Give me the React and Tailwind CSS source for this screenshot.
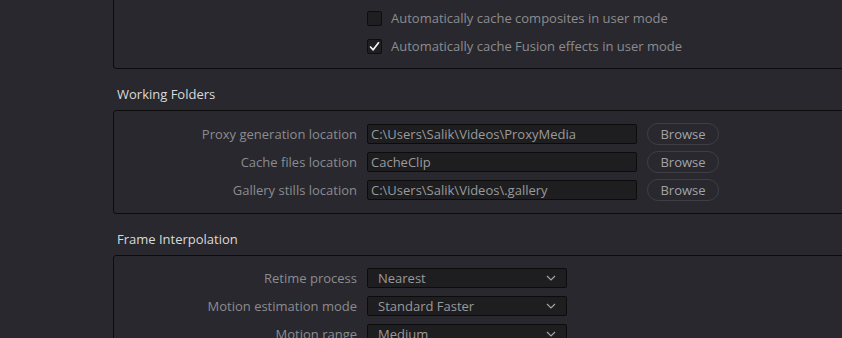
import React from 'react';

const font = { fontFamily: '"Open Sans", "Noto Sans", sans-serif' };

const Checkbox = ({ checked }) => (
  <div className="w-[15px] h-[15px] rounded-[2px] border border-[#0e0e10] bg-[#1f1f21] flex items-center justify-center">
    {checked && (
      <svg width="11" height="11" viewBox="0 0 11 11">
        <path d="M1.5 6 L4.2 8.8 L9.5 1.8" fill="none" stroke="#eef6f6" strokeWidth="1.7" strokeLinecap="round" strokeLinejoin="round" />
      </svg>
    )}
  </div>
);

const Row = ({ label, children }) => (
  <div className="grid grid-cols-[243px_1fr] gap-x-[10px] h-[28px] items-center">
    <div className="text-right text-[#8c8c8e] text-[13px] leading-none">{label}</div>
    <div className="flex items-center">{children}</div>
  </div>
);

const PathInput = ({ value }) => (
  <>
    <div className="w-[270px] h-[20px] bg-[#1e1e20] border border-[#0c0c0d] rounded-[2px] flex items-center px-[3px] text-[13px] text-[#9a9a9c] leading-none">
      {value}
    </div>
    <button className="ml-[10px] w-[72px] h-[22px] rounded-full border border-[#3e3e44] text-[13px] text-[#a3a3a5] leading-none">
      Browse
    </button>
  </>
);

const Select = ({ value }) => (
  <div className="w-[200px] h-[20px] bg-[#1e1e20] border border-[#0c0c0d] rounded-[2px] flex items-center justify-between pl-[10px] pr-[10px] text-[13px] text-[#9a9a9c] leading-none">
    <span>{value}</span>
    <svg width="10" height="6" viewBox="0 0 10 6">
      <path d="M1 1 L5 5 L9 1" fill="none" stroke="#a3a3a8" strokeWidth="1.2" />
    </svg>
  </div>
);

const Header = ({ title }) => (
  <div className="h-[41px] flex items-end pb-[8px] pl-[4px] text-[13px] leading-[16px] text-[#dadadc]">
    {title}
  </div>
);

export default function App() {
  return (
    <div className="w-[842px] h-[338px] overflow-hidden bg-[#28282e] pl-[113px]" style={font}>
      <div className="w-[800px] -mt-[20px] pt-[23px] pb-[8px] border border-[#0c0c0d] rounded-[3px]">
        <Row label="">
          <Checkbox />
          <span className="ml-[9px] text-[13px] text-[#8c8c8e] leading-none">Automatically cache composites in user mode</span>
        </Row>
        <Row label="">
          <Checkbox checked />
          <span className="ml-[9px] text-[13px] text-[#8c8c8e] leading-none">Automatically cache Fusion effects in user mode</span>
        </Row>
      </div>

      <Header title="Working Folders" />
      <div className="w-[800px] pt-[9px] pb-[9px] border border-[#0c0c0d] rounded-[3px]">
        <Row label="Proxy generation location">
          <PathInput value="C:\Users\Salik\Videos\ProxyMedia" />
        </Row>
        <Row label="Cache files location">
          <PathInput value="CacheClip" />
        </Row>
        <Row label="Gallery stills location">
          <PathInput value="C:\Users\Salik\Videos\.gallery" />
        </Row>
      </div>

      <Header title="Frame Interpolation" />
      <div className="w-[800px] pt-[8px] pb-[8px] border border-[#0c0c0d] rounded-[3px]">
        <Row label="Retime process">
          <Select value="Nearest" />
        </Row>
        <Row label="Motion estimation mode">
          <Select value="Standard Faster" />
        </Row>
        <Row label="Motion range">
          <Select value="Medium" />
        </Row>
      </div>
    </div>
  );
}
